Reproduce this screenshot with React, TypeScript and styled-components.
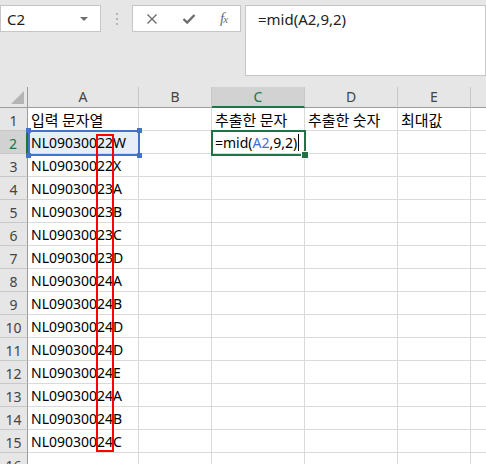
import styled, { createGlobalStyle } from "styled-components";

const GlobalStyle = createGlobalStyle`
  html, body {
    margin: 0;
    padding: 0;
    overflow: hidden;
    background: #ffffff;
  }
  body {
    font-family: "Noto Sans", "Noto Sans CJK KR", sans-serif;
  }
`;

const COLS = ["A", "B", "C", "D", "E", "F"];

const DATA = [
  "NL09030022W",
  "NL09030022X",
  "NL09030023A",
  "NL09030023B",
  "NL09030023C",
  "NL09030023D",
  "NL09030024A",
  "NL09030024B",
  "NL09030024D",
  "NL09030024D",
  "NL09030024E",
  "NL09030024A",
  "NL09030024B",
  "NL09030024C",
];

const Page = styled.div`
  width: 486px;
  height: 464px;
  background: #e6e6e6;
  overflow: hidden;
`;

const Toolbar = styled.div`
  height: 87px;
  box-sizing: border-box;
  padding-top: 5px;
  display: flex;
  align-items: flex-start;
`;

const NameBox = styled.div`
  width: 101px;
  height: 27px;
  box-sizing: border-box;
  background: #fff;
  border: 1px solid #c6c6c6;
  display: flex;
  align-items: center;
  justify-content: space-between;
  padding: 0 12px 0 6px;
  font-size: 15px;
  color: #222;
`;

const DropArrow = styled.span`
  width: 0;
  height: 0;
  border-left: 4px solid transparent;
  border-right: 4px solid transparent;
  border-top: 4px solid #6e6e6e;
`;

const Grip = styled.div`
  width: 31px;
  height: 27px;
  display: flex;
  flex-direction: column;
  align-items: center;
  justify-content: center;
  gap: 3px;
`;

const GripDot = styled.span`
  width: 2px;
  height: 2px;
  background: #b4b4b4;
`;

const FxButtons = styled.div`
  width: 109px;
  height: 27px;
  box-sizing: border-box;
  background: #fff;
  border: 1px solid #c6c6c6;
  display: grid;
  grid-template-columns: 38px 36px 33px;
  align-items: center;
  justify-items: center;
  color: #6d6d6d;
`;

const FxLabel = styled.span`
  font-family: "Liberation Serif", serif;
  font-style: italic;
  font-size: 15px;
  color: #6d6d6d;
  letter-spacing: -1px;
  & small {
    font-size: 11px;
  }
`;

const FormulaBar = styled.div`
  flex: 1;
  margin-left: 4px;
  height: 71px;
  box-sizing: border-box;
  background: #fff;
  border: 1px solid #c6c6c6;
  padding: 3px 0 0 12px;
  font-size: 15px;
  color: #222;
`;

const Sheet = styled.div`
  position: relative;
  display: grid;
  width: max-content;
  grid-template-columns: 28px 111px 73px 93px 93px 73px 73px;
  grid-template-rows: 21px;
  grid-auto-rows: 23px;
  background: #fff;
`;

const ColHead = styled.div<{ $active?: boolean }>`
  box-sizing: border-box;
  background: ${(p) => (p.$active ? "#d2d2d2" : "#e6e6e6")};
  border-right: 1px solid #c8c8c8;
  border-bottom: ${(p) => (p.$active ? "2px solid #217346" : "1px solid #9b9b9b")};
  display: flex;
  align-items: center;
  justify-content: center;
  font-size: 14px;
  color: ${(p) => (p.$active ? "#217346" : "#444")};
  padding-bottom: 1px;
`;

const Corner = styled.div`
  position: relative;
  box-sizing: border-box;
  background: #e6e6e6;
  border-right: 1px solid #9b9b9b;
  border-bottom: 1px solid #9b9b9b;
  &::after {
    content: "";
    position: absolute;
    right: 3px;
    bottom: 3px;
    width: 0;
    height: 0;
    border-left: 13px solid transparent;
    border-bottom: 13px solid #b4b4b4;
  }
`;

const RowHead = styled.div<{ $active?: boolean }>`
  box-sizing: border-box;
  background: ${(p) => (p.$active ? "#d2d2d2" : "#e6e6e6")};
  border-right: ${(p) => (p.$active ? "2px solid #217346" : "1px solid #9b9b9b")};
  border-bottom: 1px solid #c8c8c8;
  display: flex;
  align-items: center;
  justify-content: center;
  font-size: 14px;
  color: ${(p) => (p.$active ? "#217346" : "#444")};
  padding-top: 2px;
`;

const Cell = styled.div<{ $fill?: string }>`
  box-sizing: border-box;
  background: ${(p) => p.$fill || "#fff"};
  border-right: 1px solid #dadada;
  border-bottom: 1px solid #dadada;
  padding: 1px 0 0 3px;
  font-size: 14px;
  line-height: 21px;
  color: #000;
  white-space: nowrap;
  overflow: visible;
  position: relative;
`;

const Hangul = styled.span`
  font-family: "Noto Sans CJK KR", sans-serif;
  font-size: 15px;
`;

const Ref = styled.span`
  color: #3f6fd0;
`;

const Caret = styled.span`
  display: inline-block;
  width: 1px;
  height: 17px;
  background: #000;
  vertical-align: -3px;
  margin-left: 1px;
`;

const SelectBox = styled.div<{ $color: string }>`
  position: absolute;
  box-sizing: border-box;
  border: 2px solid ${(p) => p.$color};
  pointer-events: none;
`;

const Handle = styled.span<{ $color: string; $x: string; $y: string }>`
  position: absolute;
  width: 5px;
  height: 5px;
  background: ${(p) => p.$color};
  ${(p) => p.$x}: -4px;
  ${(p) => p.$y}: -4px;
`;

const FillHandle = styled.span`
  position: absolute;
  right: -5px;
  bottom: -5px;
  width: 6px;
  height: 6px;
  background: #217346;
  border: 1px solid #fff;
`;

const RedMark = styled.div`
  position: absolute;
  left: 96px;
  top: 47px;
  width: 18px;
  height: 318px;
  box-sizing: border-box;
  border: 2px solid #ff0000;
  pointer-events: none;
`;

function CloseIcon() {
  return (
    <svg width="12" height="12" viewBox="0 0 12 12">
      <path d="M1.5 1.5 L10.5 10.5 M10.5 1.5 L1.5 10.5" stroke="#6d6d6d" strokeWidth="1.4" fill="none" />
    </svg>
  );
}

function CheckIcon() {
  return (
    <svg width="14" height="12" viewBox="0 0 14 12">
      <path d="M1.5 6 L5.2 9.6 L12.5 2" stroke="#6d6d6d" strokeWidth="2.4" fill="none" />
    </svg>
  );
}

export default function App() {
  const rows = 16;

  const cellContent = (r: number, c: number) => {
    if (r === 1) {
      if (c === 0) return <Hangul>입력 문자열</Hangul>;
      if (c === 2) return <Hangul>추출한 문자</Hangul>;
      if (c === 3) return <Hangul>추출한 숫자</Hangul>;
      if (c === 4) return <Hangul>최대값</Hangul>;
      return null;
    }
    if (c === 0 && r - 2 < DATA.length) return DATA[r - 2];
    if (r === 2 && c === 2)
      return (
        <>
          =mid(<Ref>A2</Ref>,9,2)
          <Caret />
        </>
      );
    return null;
  };

  return (
    <Page>
      <GlobalStyle />
      <Toolbar>
        <NameBox>
          C2
          <DropArrow />
        </NameBox>
        <Grip>
          <GripDot />
          <GripDot />
          <GripDot />
        </Grip>
        <FxButtons>
          <CloseIcon />
          <CheckIcon />
          <FxLabel>
            f<small>x</small>
          </FxLabel>
        </FxButtons>
        <FormulaBar>=mid(A2,9,2)</FormulaBar>
      </Toolbar>

      <Sheet>
        <Corner />
        {COLS.map((c) => (
          <ColHead key={c} $active={c === "C"}>
            {c}
          </ColHead>
        ))}
        {Array.from({ length: rows }, (_, i) => {
          const r = i + 1;
          return [
            <RowHead key={`h${r}`} $active={r === 2}>
              {r}
            </RowHead>,
            ...COLS.map((_, c) => (
              <Cell key={`${r}-${c}`} $fill={r === 2 && c === 0 ? "#e8eef8" : undefined}>
                {cellContent(r, c)}
              </Cell>
            )),
          ];
        })}

        <SelectBox $color="#4472c4" style={{ left: 28, top: 43, width: 112, height: 26 }}>
          <Handle $color="#4472c4" $x="left" $y="top" />
          <Handle $color="#4472c4" $x="right" $y="top" />
          <Handle $color="#4472c4" $x="left" $y="bottom" />
          <Handle $color="#4472c4" $x="right" $y="bottom" />
        </SelectBox>
        <SelectBox $color="#217346" style={{ left: 211, top: 43, width: 95, height: 26 }}>
          <FillHandle />
        </SelectBox>
        <RedMark />
      </Sheet>
    </Page>
  );
}
